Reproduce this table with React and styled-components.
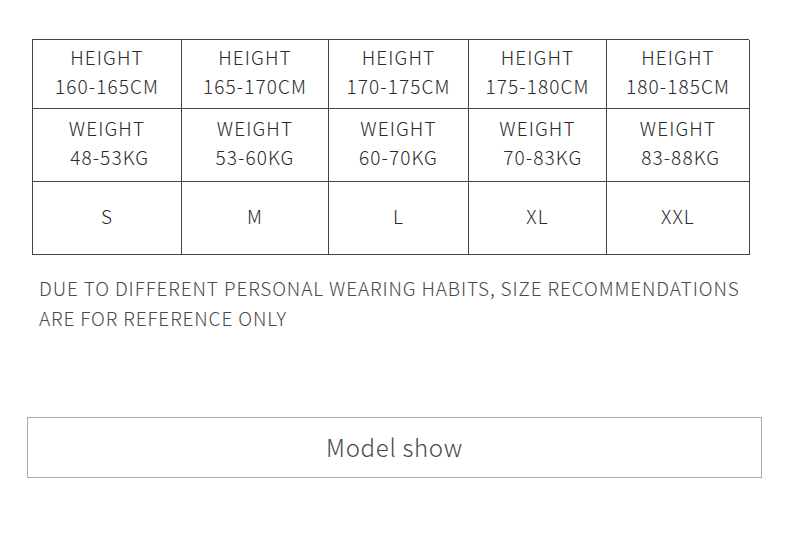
import React from 'react';
import styled, { createGlobalStyle } from 'styled-components';

const GlobalStyle = createGlobalStyle`
  html, body {
    margin: 0;
    padding: 0;
    background: #ffffff;
  }
  body {
    font-family: "Noto Sans CJK SC", "Noto Sans", sans-serif;
  }
`;

const Page = styled.div`
  width: 790px;
  height: 539px;
  padding-top: 39px;
  box-sizing: border-box;
`;

const Table = styled.div`
  margin-left: 32px;
  width: 717px;
  display: grid;
  grid-template-columns: 149px 147px 140px 138px 143px;
  grid-template-rows: 69px 73px 73px;
  border-top: 1px solid #444;
  border-left: 1px solid #444;
  box-sizing: border-box;
`;

const Cell = styled.div`
  border-right: 1px solid #444;
  border-bottom: 1px solid #444;
  display: flex;
  flex-direction: column;
  align-items: center;
  justify-content: center;
  color: #2a2a2a;
  font-size: 19px;
  font-weight: 300;
  line-height: 29px;
  letter-spacing: 1.1px;
  white-space: pre;
  padding-bottom: 6px;
  box-sizing: border-box;
`;

const Note = styled.p`
  margin: 18px 0 0 39px;
  width: 730px;
  color: #4a4a4a;
  font-size: 19px;
  font-weight: 300;
  line-height: 30px;
  letter-spacing: 0.87px;
`;

const ModelShow = styled.div`
  margin: 84px 0 0 27px;
  width: 735px;
  height: 61px;
  box-sizing: border-box;
  border: 1px solid #aaa;
  display: flex;
  align-items: center;
  justify-content: center;
  color: #4a4a4a;
  font-size: 24px;
  font-weight: 300;
  letter-spacing: 0.7px;
  padding-bottom: 2px;
`;

const heights = ['160-165CM', '165-170CM', '170-175CM', '175-180CM', '180-185CM'];
const weights = [' 48-53KG', '53-60KG', '60-70KG', '  70-83KG', ' 83-88KG'];
const sizes = ['S', 'M', 'L', 'XL', 'XXL'];

export default function App() {
  return (
    <Page>
      <GlobalStyle />
      <Table>
        {heights.map((h) => (
          <Cell key={h}>
            <span>HEIGHT</span>
            <span>{h}</span>
          </Cell>
        ))}
        {weights.map((w) => (
          <Cell key={w}>
            <span>WEIGHT</span>
            <span>{w}</span>
          </Cell>
        ))}
        {sizes.map((s) => (
          <Cell key={s}>{s}</Cell>
        ))}
      </Table>
      <Note>
        DUE TO DIFFERENT PERSONAL WEARING HABITS, SIZE RECOMMENDATIONS
        <br />
        ARE FOR REFERENCE ONLY
      </Note>
      <ModelShow>Model show</ModelShow>
    </Page>
  );
}
